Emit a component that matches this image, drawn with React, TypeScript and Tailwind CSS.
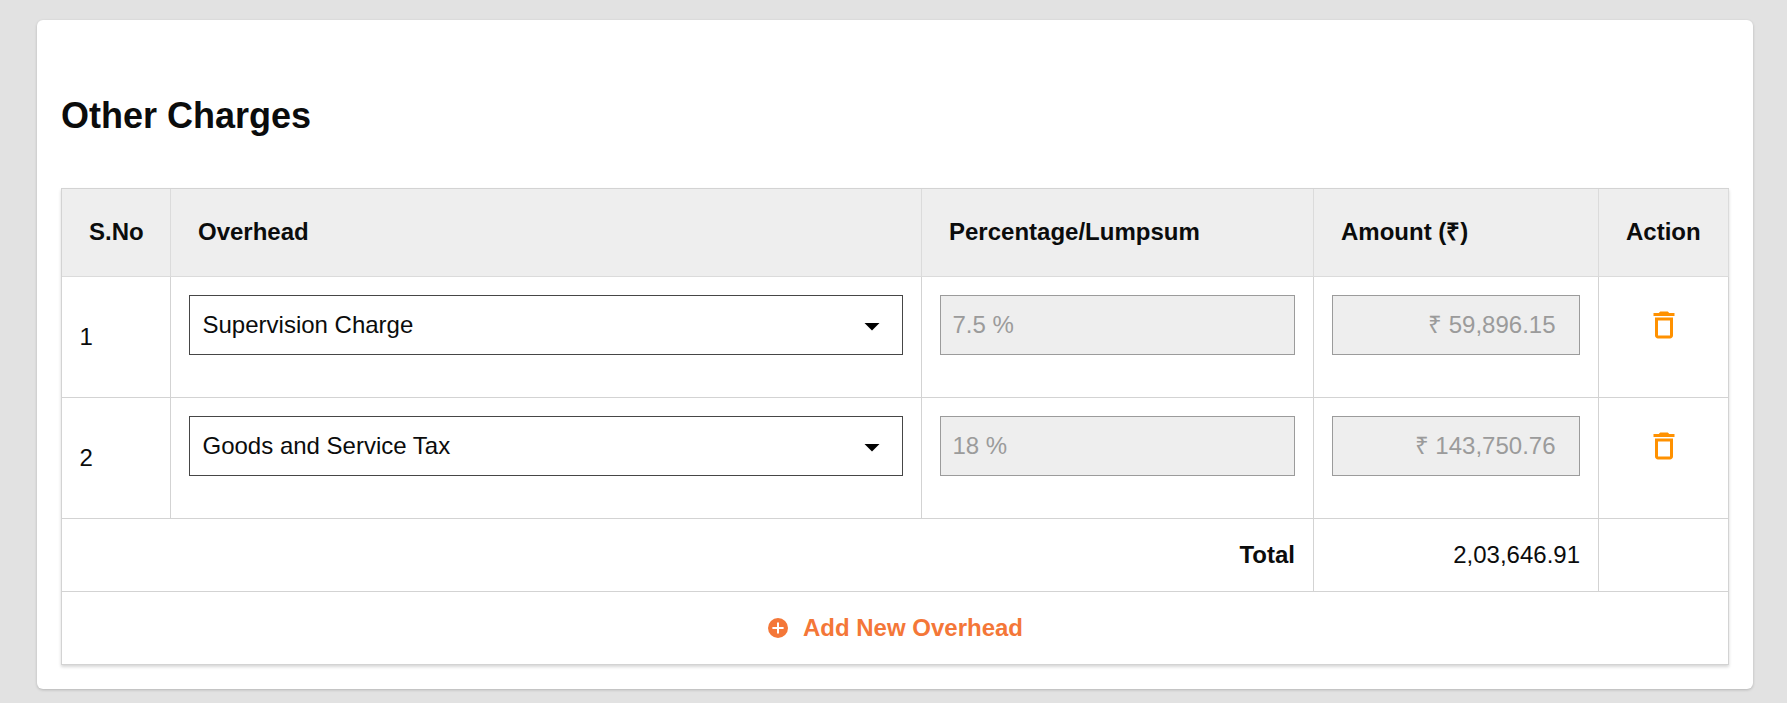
import type { ReactNode } from "react";
import { MdArrowDropDown, MdDeleteOutline } from "react-icons/md";

type Charge = { id: number; overhead: string; rate: string; amount: string };

const charges: Charge[] = [
  { id: 1, overhead: "Supervision Charge", rate: "7.5 %", amount: "₹ 59,896.15" },
  { id: 2, overhead: "Goods and Service Tax", rate: "18 %", amount: "₹ 143,750.76" },
];

const columns = ["S.No", "Overhead", "Percentage/Lumpsum", "Amount (₹)", "Action"];

function AddIcon({ className = "" }: { className?: string }) {
  return (
    <svg viewBox="0 0 24 24" className={className} aria-hidden="true">
      <circle cx="12" cy="12" r="10" fill="currentColor" />
      <path d="M12 6.4v11.2M6.4 12h11.2" stroke="#fff" strokeWidth="2" />
    </svg>
  );
}

function Cell({ className = "", children }: { className?: string; children?: ReactNode }) {
  return <div className={`border-r border-b border-[#d3d3d3] ${className}`}>{children}</div>;
}

function ChargeRow({ charge }: { charge: Charge }) {
  return (
    <>
      <Cell className="flex h-[121px] items-center pl-[17.5px]">{charge.id}</Cell>
      <Cell className="px-[18px] pt-[18px]">
        <div className="flex h-[60px] items-center justify-between border border-[#464646] bg-white pl-[12.5px] pr-3">
          <span>{charge.overhead}</span>
          <MdArrowDropDown className="mt-0.5 size-9 text-black" />
        </div>
      </Cell>
      <Cell className="px-[18px] pt-[18px]">
        <div className="flex h-[60px] items-center border border-[#9b9b9b] bg-[#eeeeee] pl-[11.5px] text-[#9b9b9b]">
          {charge.rate}
        </div>
      </Cell>
      <Cell className="px-[18px] pt-[18px]">
        <div className="flex h-[60px] items-center justify-end border border-[#9b9b9b] bg-[#eeeeee] pr-[23.5px] text-[#9b9b9b]">
          {charge.amount}
        </div>
      </Cell>
      <Cell className="flex justify-center pt-[30px]">
        <MdDeleteOutline className="size-9 text-[#ff9100]" />
      </Cell>
    </>
  );
}

export default function App() {
  return (
    <div className="h-[703px] bg-[#e2e2e2] pt-5 pl-[37px] font-['Liberation_Sans',Arial,sans-serif] text-2xl leading-7 text-[#0b0c0c]">
      <div className="h-[669px] w-[1716px] rounded-md bg-white px-6 pt-[76px] shadow-[0_1px_3px_rgba(0,0,0,0.2)]">
        <h1 className="text-4xl leading-10 font-bold">Other Charges</h1>
        <div className="mt-[52px] grid w-[1668px] grid-cols-[109px_751px_392px_285px_130px] border-t border-l border-[#d3d3d3] shadow-[0_2px_3px_rgba(0,0,0,0.16)]">
          {columns.map((label) => (
            <div
              key={label}
              className="flex h-[88px] items-center border-r border-b border-[#dbdbdb] bg-[#eeeeee] pb-0.5 pl-[27px] font-bold"
            >
              {label}
            </div>
          ))}
          {charges.map((charge) => (
            <ChargeRow key={charge.id} charge={charge} />
          ))}
          <Cell className="col-span-3 flex h-[73px] items-center justify-end pr-[18px] font-bold">Total</Cell>
          <Cell className="flex items-center justify-end pr-[18px]">2,03,646.91</Cell>
          <Cell />
          <Cell className="col-span-5 flex h-[73px] items-center justify-center gap-3 font-bold text-[#f47738]">
            <AddIcon className="mr-px -ml-px size-6" />
            <span>Add New Overhead</span>
          </Cell>
        </div>
      </div>
    </div>
  );
}
